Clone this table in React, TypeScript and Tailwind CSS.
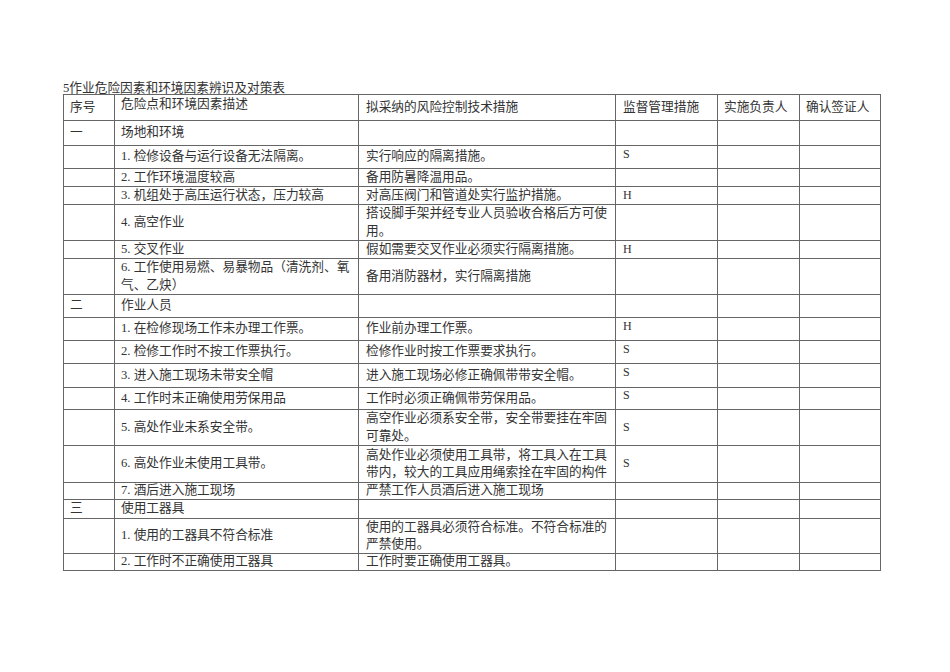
import React from "react";

type Row = {
  h: string;
  no?: string;
  desc?: React.ReactNode;
  measure?: React.ReactNode;
  sup?: string;
  supTop?: boolean;
};

const rows: Row[] = [
  { h: "h-[25px]", no: "一", desc: "场地和环境" },
  { h: "h-[23px]", desc: "1. 检修设备与运行设备无法隔离。", measure: "实行响应的隔离措施。", sup: "S", supTop: true },
  { h: "h-[18px]", desc: "2. 工作环境温度较高", measure: "备用防暑降温用品。" },
  { h: "h-[18px]", desc: "3. 机组处于高压运行状态，压力较高", measure: "对高压阀门和管道处实行监护措施。", sup: "H" },
  {
    h: "h-[36px]",
    desc: "4. 高空作业",
    measure: (
      <>
        搭设脚手架并经专业人员验收合格后方可使
        <br />
        用。
      </>
    ),
  },
  { h: "h-[18px]", desc: "5. 交叉作业", measure: "假如需要交叉作业必须实行隔离措施。", sup: "H" },
  {
    h: "h-[36px]",
    desc: (
      <>
        6. 工作使用易燃、易暴物品（清洗剂、氧
        <br />
        气、乙炔）
      </>
    ),
    measure: "备用消防器材，实行隔离措施",
  },
  { h: "h-[23px]", no: "二", desc: "作业人员" },
  { h: "h-[23px]", desc: "1. 在检修现场工作未办理工作票。", measure: "作业前办理工作票。", sup: "H", supTop: true },
  { h: "h-[23px]", desc: "2. 检修工作时不按工作票执行。", measure: "检修作业时按工作票要求执行。", sup: "S", supTop: true },
  { h: "h-[24px]", desc: "3. 进入施工现场未带安全帽", measure: "进入施工现场必修正确佩带带安全帽。", sup: "S", supTop: true },
  { h: "h-[22px]", desc: "4. 工作时未正确使用劳保用品", measure: "工作时必须正确佩带劳保用品。", sup: "S", supTop: true },
  {
    h: "h-[36px]",
    desc: "5. 高处作业未系安全带。",
    measure: (
      <>
        高空作业必须系安全带，安全带要挂在牢固
        <br />
        可靠处。
      </>
    ),
    sup: "S",
  },
  {
    h: "h-[37px]",
    desc: "6. 高处作业未使用工具带。",
    measure: (
      <>
        高处作业必须使用工具带，将工具入在工具
        <br />
        带内，较大的工具应用绳索拴在牢固的构件
      </>
    ),
    sup: "S",
  },
  { h: "h-[17px]", desc: "7. 酒后进入施工现场", measure: "严禁工作人员酒后进入施工现场" },
  { h: "h-[19px]", no: "三", desc: "使用工器具" },
  {
    h: "h-[35px]",
    desc: "1. 使用的工器具不符合标准",
    measure: (
      <>
        使用的工器具必须符合标准。不符合标准的
        <br />
        严禁使用。
      </>
    ),
  },
  { h: "h-[17px]", desc: "2. 工作时不正确使用工器具", measure: "工作时要正确使用工器具。" },
];

const cell = "flex items-center border-l border-[#666] whitespace-nowrap";

export default function App() {
  return (
    <div className="min-h-[672px] w-[950px] bg-white font-['Liberation_Serif','Noto_Sans_CJK_SC',serif] text-[12.7px] text-[#333]">
      <div className="pl-[63px] pt-[82px]">
        <div className="h-[12px] leading-[12px]">5作业危险因素和环境因素辨识及对策表</div>
        <div className="w-[818px] border-t border-[#666] leading-[17.5px]">
          <div className="flex h-[26px] border-b border-[#666]">
            <div className={`${cell} w-[51px] pl-[6px]`}>序号</div>
            <div className={`${cell} w-[244px] pb-[6px] pl-[6px]`}>危险点和环境因素描述</div>
            <div className={`${cell} w-[257px] pl-[7px]`}>拟采纳的风险控制技术措施</div>
            <div className={`${cell} w-[102px] pl-[7px]`}>监督管理措施</div>
            <div className={`${cell} w-[82px] pl-[6px]`}>实施负责人</div>
            <div className={`${cell} w-[82px] border-r pl-[6px]`}>确认签证人</div>
          </div>
          {rows.map((r, i) => (
            <div key={i} className={`flex border-b border-[#666] ${r.h}`}>
              <div className={`${cell} w-[51px] pl-[6px]`}>{r.no}</div>
              <div className={`${cell} w-[244px] pl-[6px]`}>
                <div>{r.desc}</div>
              </div>
              <div className={`${cell} w-[257px] pl-[7px]`}>
                <div>{r.measure}</div>
              </div>
              <div
                className={`${cell} w-[102px] pl-[7px] font-['Liberation_Serif',serif] text-[12px] ${
                  r.supTop ? "pb-[5px]" : ""
                }`}
              >
                {r.sup}
              </div>
              <div className={`${cell} w-[82px]`} />
              <div className={`${cell} w-[82px] border-r`} />
            </div>
          ))}
        </div>
      </div>
    </div>
  );
}
